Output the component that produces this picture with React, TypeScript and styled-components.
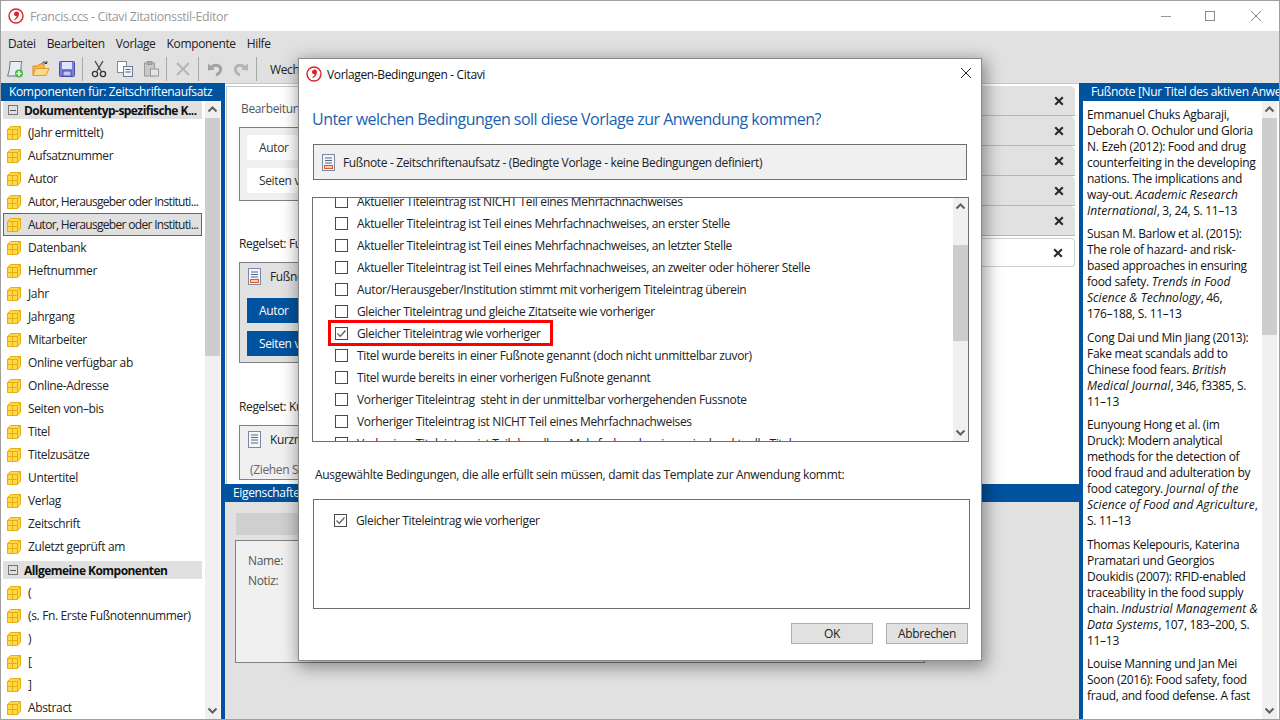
import React from "react";
import styled, { createGlobalStyle } from "styled-components";

const Global = createGlobalStyle`
  html, body { margin: 0; padding: 0; height: 720px; overflow: hidden; background: #fff; }
  #root { height: 720px; }
  * { box-sizing: border-box; }
  body { font-family: "Open Sans", "Noto Sans", sans-serif; font-size: 12px; letter-spacing: -0.35px; color: #1a1a1a; }
`;

const BLUE = "#00539f";

const Win = styled.div`
  position: relative; width: 1280px; height: 720px; overflow: hidden; display: flex; flex-direction: column;
  border: 1px solid #a0a0a0; background: #fff;
`;
const TitleBar = styled.div`
  height: 30px; flex: none; display: flex; align-items: center; background: #fff; color: #999; font-size: 12.4px; padding-left: 7px;
`;
const TitleText = styled.span`margin-left: 6px; flex: 1;`;
const WinCtl = styled.svg`width: 46px; height: 30px; flex: none;`;
const MenuBar = styled.div`
  height: 24px; flex: none; background: #e1e1e1; display: flex; align-items: center; padding-left: 7px; gap: 11px; color: #222;
`;
const ToolBar = styled.div`
  height: 28px; flex: none; background: #e1e1e1; display: flex; align-items: center; padding-left: 5px; color: #222;
`;
const ToolIcon = styled.svg`width: 18px; height: 18px; flex: none; margin-right: 8px;`;
const ToolSep = styled.span`width: 1px; height: 24px; background: #a8a8a8; flex: none; margin: 0 7px 0 -2px;`;
const ToolLabel = styled.span`margin-left: 6px; white-space: nowrap;`;
const Main = styled.div`flex: 1; display: flex; min-height: 0;`;

const Left = styled.div`width: 220px; flex: none; display: flex; flex-direction: column; background: #fff;`;
const BlueHead = styled.div<{ $pad?: number }>`
  height: 18px; flex: none; background: ${BLUE}; color: #fff; line-height: 17px; padding-left: ${(p) => p.$pad ?? 8}px; white-space: nowrap; overflow: hidden;
`;
const LeftBody = styled.div`flex: 1; display: flex; min-height: 0; padding-left: 2px;`;
const Tree = styled.div`width: 199px; flex: none; overflow: hidden;`;
const Group = styled.div`
  height: 18px; margin-bottom: 2px; background: #e0e0e0; display: flex; align-items: center; font-weight: 700; color: #111; padding-left: 5px; gap: 6px; white-space: nowrap; letter-spacing: -0.55px;
  &:not(:first-child) { margin-top: 3px; }
`;
const Expander = styled.span`
  width: 10px; height: 10px; border: 1px solid #777; flex: none; display: flex; align-items: center; justify-content: center;
  &::before { content: ""; width: 6px; height: 1px; background: #555; }
`;
const Item = styled.div<{ $sel?: boolean; $tight?: boolean }>`
  height: 23px; display: flex; align-items: center; gap: 7px; padding-left: 4px; white-space: nowrap; color: #222;
  ${(p) => p.$tight && `letter-spacing: -0.68px;`}
  ${(p) => p.$sel && `background: #e0e0e0; outline: 1px solid #3a6db5; outline-offset: -1px;`}
`;
const Bar = styled.div`
  width: 15px; flex: none; background: #f0f0f0; display: flex; flex-direction: column;
`;
const Arrow = styled.svg`width: 100%; height: 17px; flex: none; display: block;`;
const Thumb = styled.div<{ $top: number; $h: number }>`margin-top: ${(p) => p.$top}px; height: ${(p) => p.$h}px; flex: none; background: #cdcdcd;`;
const BarGrow = styled.div`flex: 1;`;

const ScrollBar = ({ top, thumb }: { top: number; thumb: number }) => (
  <Bar>
    <Arrow viewBox="0 0 15 17"><path d="M3.5 10.5 L7.5 6.5 L11.5 10.5" fill="none" stroke="#606060" strokeWidth="2" /></Arrow>
    <Thumb $top={top} $h={thumb} />
    <BarGrow />
    <Arrow viewBox="0 0 15 17"><path d="M3.5 6.5 L7.5 10.5 L11.5 6.5" fill="none" stroke="#606060" strokeWidth="2" /></Arrow>
  </Bar>
);

const BlueDiv = styled.div`width: 4px; flex: none; background: ${BLUE};`;
const Center = styled.div`flex: 1; display: flex; flex-direction: column; min-width: 0;`;
const Upper = styled.div`
  height: 401px; flex: none; background: #fff; border-top: 1px solid #c8c8c8; display: flex; overflow: hidden;
`;
const RuleArea = styled.div`
  width: 650px; flex: none; margin: 2px 0 0 1px; padding: 13px 0 0 12px; border-left: 1px solid #c4c4c4; border-top: 1px solid #c4c4c4;
`;
const Muted = styled.div`color: #555; height: 16px; white-space: nowrap; margin-left: 2px;`;
const RuleLabel = styled.div<{ $mt: number }>`color: #222; height: 16px; margin-top: ${(p) => p.$mt}px; white-space: nowrap;`;
const RuleBox = styled.div<{ $bg: string; $h: number }>`
  background: ${(p) => p.$bg}; border: 1px solid #808080; height: ${(p) => p.$h}px; margin-top: 11px; padding: 7px; width: 640px;
  border-right: 0;
`;
const Chip = styled.div<{ $blue?: boolean }>`
  width: 200px; height: 25px; margin-bottom: 8px; background: ${(p) => (p.$blue ? BLUE : "#fff")}; color: ${(p) => (p.$blue ? "#fff" : "#333")};
  line-height: 26px; padding-left: 12px;
`;
const RuleHead = styled.div`display: flex; align-items: center; gap: 9px; height: 24px; padding-left: 1px; margin: -6px 0 10px; color: #222;`;
const DropHint = styled.div`color: #666; padding-left: 3px; height: 16px; white-space: nowrap;`;
const Tabs = styled.div`flex: 1; padding-top: 2px; padding-right: 4px;`;
const TabRow = styled.div<{ $on?: boolean }>`
  height: 30px; display: flex; align-items: center; justify-content: flex-end; padding-right: 11px;
  background: ${(p) => (p.$on ? "#fff" : "#e1e1e1")}; border-bottom: 1px solid #b5b5b5; border-radius: 0 5px 0 0;
  ${(p) => p.$on && `height: 29px; margin-top: 2px; border: 1px solid #cfcfcf; border-left: 0; border-radius: 0 4px 4px 0;`}
`;
const XIcon = styled.svg`width: 10px; height: 10px; display: block;`;
const Lower = styled.div`flex: 1; background: #e1e1e1; display: flex; flex-direction: column; min-height: 0;`;
const LowerBody = styled.div`padding: 11px 0 0 10px;`;
const GreyBtn = styled.div`width: 689px; height: 22px; margin-left: 1px; background: #cfcfcf;`;
const PropBox = styled.div`
  width: 690px; height: 123px; margin-top: 5px; background: #f0f0f0; border: 1px solid #808080; padding: 10px 12px; color: #555; line-height: 20px;
`;

const Right = styled.div`width: 196px; flex: none; display: flex; flex-direction: column; background: #fff;`;
const RightBody = styled.div`flex: 1; display: flex; min-height: 0; overflow: hidden;`;
const Notes = styled.div`
  width: 179px; flex: none; padding: 5.5px 0 0 4px; line-height: 16px; color: #111; overflow: hidden; white-space: nowrap; letter-spacing: -0.3px;
  i { letter-spacing: 0.05px; }
`;
const Note = styled.p`margin: 0 0 7.5px;`;
const Pad = styled.div<{ $w: number }>`width: ${(p) => p.$w}px; flex: none;`;

const Dialog = styled.div`
  position: absolute; left: 297px; top: 57px; width: 684px; height: 603px; background: #fff; border: 1px solid #8a8a8a;
  box-shadow: 2px 4px 16px 2px rgba(0,0,0,.4); display: flex; flex-direction: column; padding-left: 13px; color: #222;
`;
const DlgTitle = styled.div`height: 30px; flex: none; display: flex; align-items: center; margin-left: -6px; gap: 5px; color: #111; position: relative;`;
const DlgClose = styled.svg`position: absolute; right: 9px; top: 8px; width: 12px; height: 12px;`;
const Heading = styled.h1`margin: 18px 0 0; height: 24px; font-size: 16px; font-weight: 400; line-height: 24px; color: #1a5fb0; letter-spacing: -0.53px; white-space: nowrap; flex: none;`;
const InfoBox = styled.div`
  width: 654px; height: 36px; margin: 13px 0 0 1px; background: #f0f0f0; border: 1px solid #6e6e6e; display: flex; align-items: center; gap: 8px; padding-left: 8px; color: #222; flex: none;
`;
const ListBox = styled.div`
  width: 657px; height: 245px; margin-top: 17px; border: 1px solid #6e6e6e; display: flex; flex: none; overflow: hidden;
`;
const ListInner = styled.div`flex: 1; margin-top: -8px; height: 260px;`;
const Row = styled.div`height: 22px; display: flex; align-items: center; gap: 9px; padding-left: 22px; white-space: pre; position: relative; color: #222;`;
const SelRow = styled(Row)`padding-left: 20px;`;
const Mark = styled.span`position: absolute; left: 15px; top: -2px; width: 225px; height: 26px; border: 3px solid #f00; pointer-events: none;`;
const Check = styled.svg`width: 13px; height: 13px; flex: none; display: block;`;
const SelLabel = styled.div`margin: 24px 0 0 3px; height: 16px; flex: none; color: #222; white-space: nowrap; letter-spacing: -0.31px;`;
const SelBox = styled.div`width: 657px; height: 110px; margin: 17px 0 0 1px; border: 1px solid #6e6e6e; padding-top: 9px; flex: none;`;
const Buttons = styled.div`display: flex; justify-content: flex-end; gap: 13px; margin-top: 14px; padding-right: 13px;`;
const Btn = styled.div`width: 82px; height: 21px; background: #e1e1e1; border: 1px solid #adadad; text-align: center; line-height: 19px; color: #222;`;

const Logo = ({ size = 16 }: { size?: number }) => (
  <svg width={size} height={size} viewBox="0 0 16 16" style={{ flex: "none", display: "block" }}>
    <circle cx="8" cy="8" r="7" fill="#fff" stroke="#d8242a" strokeWidth="1.4" />
    <path d="M8.6 3.6 C10.6 3.6 11.2 5 11 6.4 C10.7 8.6 9 10.8 6.8 12 L6.2 11.4 C7.6 10.2 8.4 9.2 8.8 8.2 C7.4 8.4 6 7.6 6 6 C6 4.6 7.2 3.6 8.6 3.6 Z" fill="#d8242a" />
  </svg>
);

const Cube = () => (
  <svg width="14" height="14" viewBox="0 0 14 14" style={{ flex: "none", display: "block" }}>
    <path d="M0.5 3.5 L3.5 0.5 H13.5 V10 L10.5 13.5 H0.5 Z" fill="#ffd84a" stroke="#e8ad10" />
    <path d="M0.5 3.5 H10.5 V13.5 M10.5 3.5 L13.5 .5 M0.5 8.5 H10.5 M5.5 3.5 V13.5" fill="none" stroke="#e8ad10" />
  </svg>
);

const DocIcon = ({ red }: { red?: boolean }) => (
  <svg width="13" height="17" viewBox="0 0 13 17" style={{ flex: "none", display: "block" }}>
    <rect x="0.5" y="0.5" width="12" height="16" fill="#f4f6fa" stroke="#7b8aa3" />
    <path d="M3 4 H10 M3 6.5 H10 M3 9 H10" stroke="#58698a" />
    {red ? <rect x="2.5" y="11.5" width="8" height="3" fill="#f6d0b8" stroke="#e2572a" /> : <path d="M3 12 H10" stroke="#58698a" />}
  </svg>
);

const CheckBox = ({ on }: { on?: boolean }) => (
  <Check viewBox="0 0 13 13">
    <rect x="0.5" y="0.5" width="12" height="12" fill="#fff" stroke="#4a4a4a" />
    {on && <path d="M2.5 6.5 L5.2 9.3 L10.5 3.5" fill="none" stroke="#555" strokeWidth="1.2" />}
  </Check>
);

const X = () => (
  <XIcon viewBox="0 0 10 10"><path d="M1.2 1.2 L8.8 8.8 M8.8 1.2 L1.2 8.8" stroke="#2a2a2a" strokeWidth="2.1" /></XIcon>
);

const group1 = ["(Jahr ermittelt)", "Aufsatznummer", "Autor", "Autor, Herausgeber oder Instituti...", "Autor, Herausgeber oder Instituti...", "Datenbank", "Heftnummer", "Jahr", "Jahrgang", "Mitarbeiter", "Online verfügbar ab", "Online-Adresse", "Seiten von–bis", "Titel", "Titelzusätze", "Untertitel", "Verlag", "Zeitschrift", "Zuletzt geprüft am"];
const group2 = ["(", "(s. Fn. Erste Fußnotennummer)", ")", "[", "]", "Abstract"];

const conds = [
  "Aktueller Titeleintrag ist NICHT Teil eines Mehrfachnachweises",
  "Aktueller Titeleintrag ist Teil eines Mehrfachnachweises, an erster Stelle",
  "Aktueller Titeleintrag ist Teil eines Mehrfachnachweises, an letzter Stelle",
  "Aktueller Titeleintrag ist Teil eines Mehrfachnachweises, an zweiter oder höherer Stelle",
  "Autor/Herausgeber/Institution stimmt mit vorherigem Titeleintrag überein",
  "Gleicher Titeleintrag und gleiche Zitatseite wie vorheriger",
  "Gleicher Titeleintrag wie vorheriger",
  "Titel wurde bereits in einer Fußnote genannt (doch nicht unmittelbar zuvor)",
  "Titel wurde bereits in einer vorherigen Fußnote genannt",
  "Vorheriger Titeleintrag  steht in der unmittelbar vorhergehenden Fussnote",
  "Vorheriger Titeleintrag ist NICHT Teil eines Mehrfachnachweises",
  "Vorheriger Titeleintrag ist Teil desselben Mehrfachnachweises wie der aktuelle Titel",
];

export default function App() {
  return (
    <Win>
      <Global />
      <TitleBar>
        <Logo />
        <TitleText>Francis.ccs - Citavi Zitationsstil-Editor</TitleText>
        <WinCtl viewBox="0 0 46 30"><path d="M20 15.5 H30" stroke="#999" /></WinCtl>
        <WinCtl viewBox="0 0 46 30"><rect x="18.5" y="10.5" width="9" height="9" fill="none" stroke="#888" /></WinCtl>
        <WinCtl viewBox="0 0 46 30"><path d="M18 10 L28 20 M28 10 L18 20" stroke="#888" /></WinCtl>
      </TitleBar>
      <MenuBar>
        <span>Datei</span><span>Bearbeiten</span><span>Vorlage</span><span>Komponente</span><span>Hilfe</span>
      </MenuBar>
      <ToolBar>
        <ToolIcon viewBox="0 0 18 18"><path d="M4 1.5 H16 C15 3 15 8 15 12 H11 V16 H1.5 C3 13 4 6 4 1.5 Z" fill="#e8edf5" stroke="#66748c" /><circle cx="13" cy="13.5" r="4" fill="#4cb548" /><path d="M13 11 V16 M10.5 13.5 H15.5" stroke="#fff" strokeWidth="1.6" /></ToolIcon>
        <ToolIcon viewBox="0 0 18 18"><path d="M1 15.5 V6 H6 L7.5 4 H12 V15.5 Z" fill="#f6b94a" stroke="#d98a20" /><path d="M1 15.5 L3.5 8.5 H17 L14 15.5 Z" fill="#ffd98a" stroke="#e09a30" /><path d="M10 3.5 C11 1.5 13 1.5 14.5 3 M14.8 1 V3.5 H12.4" fill="none" stroke="#333" /></ToolIcon>
        <ToolIcon viewBox="0 0 18 18"><rect x="1.5" y="1.5" width="15" height="15" rx="1" fill="#7b7fdc" stroke="#4b4fa8" /><rect x="4" y="2" width="10" height="7" fill="#dfe3fb" /><rect x="5" y="11" width="8" height="5" fill="#c3c7ee" stroke="#4b4fa8" /></ToolIcon>
        <ToolSep />
        <ToolIcon viewBox="0 0 18 18"><path d="M5 1 L11 11 M13 1 L7 11" stroke="#444" strokeWidth="1.3" fill="none" /><circle cx="5" cy="14" r="2.6" fill="none" stroke="#333" strokeWidth="1.3" /><circle cx="13" cy="14" r="2.6" fill="none" stroke="#333" strokeWidth="1.3" /></ToolIcon>
        <ToolIcon viewBox="0 0 18 18"><rect x="1.5" y="1.5" width="9" height="11" fill="#fff" stroke="#7c8aa0" /><rect x="7.5" y="6.5" width="9" height="10" fill="#eef2f8" stroke="#6b7b94" /><path d="M9.5 9.5 H14.5 M9.5 12 H14.5" stroke="#55657f" /></ToolIcon>
        <ToolIcon viewBox="0 0 18 18"><rect x="2.5" y="3" width="10" height="13" fill="#c8c8c8" stroke="#999" /><rect x="5" y="1.5" width="5" height="3" fill="#aaa" stroke="#999" /><rect x="8.5" y="9" width="8" height="7" fill="#e4e4e4" stroke="#999" /></ToolIcon>
        <ToolSep />
        <ToolIcon viewBox="0 0 18 18"><path d="M3 3 L15 15 M15 3 L3 15" stroke="#b5b5b5" strokeWidth="2" /></ToolIcon>
        <ToolSep />
        <ToolIcon viewBox="0 0 18 18"><path d="M5 8 C7 4.5 13 4 14.5 8 C15.5 11 13 14 10 15" fill="none" stroke="#a2a2a2" strokeWidth="3" /><path d="M2 3.5 L9 9.5 L2 10.5 Z" fill="#a2a2a2" /></ToolIcon>
        <ToolIcon viewBox="0 0 18 18"><path d="M13 8 C11 4.5 5 4 3.5 8 C2.5 11 5 14 8 15" fill="none" stroke="#b4b4b4" strokeWidth="3" /><path d="M16 3.5 L9 9.5 L16 10.5 Z" fill="#b4b4b4" /></ToolIcon>
        <ToolSep />
        <ToolLabel>Wechseln</ToolLabel>
      </ToolBar>
      <Main>
        <Left>
          <BlueHead>Komponenten für: Zeitschriftenaufsatz</BlueHead>
          <LeftBody>
            <Tree>
              <Group><Expander /><span>Dokumententyp-spezifische K...</span></Group>
              {group1.map((t, i) => (
                <Item key={i} $sel={i === 4} $tight={i === 3 || i === 4}><Cube /><span>{t}</span></Item>
              ))}
              <Group><Expander /><span>Allgemeine Komponenten</span></Group>
              {group2.map((t, i) => (
                <Item key={i}><Cube /><span>{t}</span></Item>
              ))}
            </Tree>
            <Pad $w={3} />
            <ScrollBar top={0} thumb={238} />
          </LeftBody>
        </Left>
        <BlueDiv />
        <Center>
          <Upper>
            <RuleArea>
              <Muted>Bearbeitung</Muted>
              <RuleBox $bg="#f0f0f0" $h={74}>
                <Chip>Autor</Chip>
                <Chip>Seiten von–bis</Chip>
              </RuleBox>
              <RuleLabel $mt={34}>Regelset: Fußnote</RuleLabel>
              <RuleBox $bg="#e1e1e1" $h={101}>
                <RuleHead><DocIcon red /><span>Fußnote</span></RuleHead>
                <Chip $blue>Autor</Chip>
                <Chip $blue>Seiten von–bis</Chip>
              </RuleBox>
              <RuleLabel $mt={35}>Regelset: Kurznachweis</RuleLabel>
              <RuleBox $bg="#f0f0f0" $h={55}>
                <RuleHead><DocIcon /><span>Kurznachweis</span></RuleHead>
                <DropHint>(Ziehen Sie Komponenten hierher)</DropHint>
              </RuleBox>
            </RuleArea>
            <Tabs>
              {[0, 1, 2, 3, 4, 5].map((i) => (
                <TabRow key={i} $on={i === 5}><X /></TabRow>
              ))}
            </Tabs>
          </Upper>
          <BlueHead $pad={8}>Eigenschaften</BlueHead>
          <Lower>
            <LowerBody>
              <GreyBtn />
              <PropBox>Name:<br />Notiz:</PropBox>
            </LowerBody>
          </Lower>
        </Center>
        <BlueDiv />
        <Right>
          <BlueHead>Fußnote [Nur Titel des aktiven Anwendungsfalls]</BlueHead>
          <RightBody>
            <Notes>
              <Note>Emmanuel Chuks Agbaraji,<br />Deborah O. Ochulor und Gloria<br />N. Ezeh (2012): Food and drug<br />counterfeiting in the developing<br />nations. The implications and<br />way-out. <i>Academic Research<br />International</i>, 3, 24, S. 11–13</Note>
              <Note>Susan M. Barlow et al. (2015):<br />The role of hazard- and risk-<br />based approaches in ensuring<br />food safety. <i>Trends in Food<br />Science &amp; Technology</i>, 46,<br />176–188, S. 11–13</Note>
              <Note>Cong Dai und Min Jiang (2013):<br />Fake meat scandals add to<br />Chinese food fears. <i>British<br />Medical Journal</i>, 346, f3385, S.<br />11–13</Note>
              <Note>Eunyoung Hong et al. (im<br />Druck): Modern analytical<br />methods for the detection of<br />food fraud and adulteration by<br />food category. <i>Journal of the<br />Science of Food and Agriculture</i>,<br />S. 11–13</Note>
              <Note>Thomas Kelepouris, Katerina<br />Pramatari und Georgios<br />Doukidis (2007): RFID-enabled<br />traceability in the food supply<br />chain. <i>Industrial Management &amp;<br />Data Systems</i>, 107, 183–200, S.<br />11–13</Note>
              <Note>Louise Manning und Jan Mei<br />Soon (2016): Food safety, food<br />fraud, and food defense. A fast</Note>
            </Notes>
            <ScrollBar top={0} thumb={217} />
            <Pad $w={2} />
          </RightBody>
        </Right>
      </Main>
      <Dialog>
        <DlgTitle>
          <Logo />
          <span>Vorlagen-Bedingungen - Citavi</span>
          <DlgClose viewBox="0 0 12 12"><path d="M1 1 L11 11 M11 1 L1 11" stroke="#222" strokeWidth="1" /></DlgClose>
        </DlgTitle>
        <Heading>Unter welchen Bedingungen soll diese Vorlage zur Anwendung kommen?</Heading>
        <InfoBox><DocIcon red /><span>Fußnote - Zeitschriftenaufsatz - (Bedingte Vorlage - keine Bedingungen definiert)</span></InfoBox>
        <ListBox>
          <ListInner>
            {conds.map((c, i) => (
              <Row key={i}>
                <CheckBox on={i === 6} />
                <span>{c}</span>
                {i === 6 && <Mark />}
              </Row>
            ))}
          </ListInner>
          <ScrollBar top={30} thumb={96} />
        </ListBox>
        <SelLabel>Ausgewählte Bedingungen, die alle erfüllt sein müssen, damit das Template zur Anwendung kommt:</SelLabel>
        <SelBox>
          <SelRow><CheckBox on /><span>Gleicher Titeleintrag wie vorheriger</span></SelRow>
        </SelBox>
        <Buttons><Btn>OK</Btn><Btn>Abbrechen</Btn></Buttons>
      </Dialog>
    </Win>
  );
}
